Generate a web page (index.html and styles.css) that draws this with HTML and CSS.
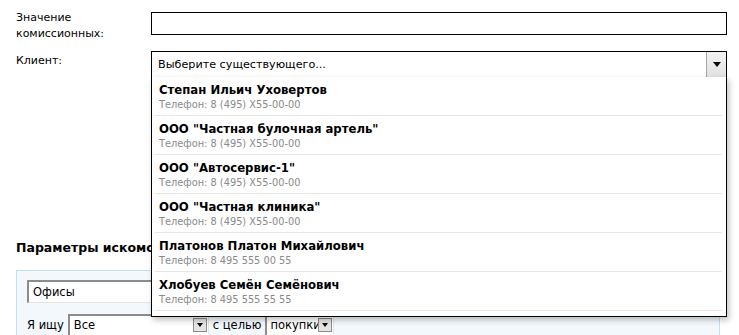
FILE: index.html
```html
<!DOCTYPE html>
<html lang="ru">
<head>
  <meta charset="UTF-8">
  <title>Объект</title>
  <link rel="stylesheet" href="styles.css">
</head>
<body>

<div class="page">
  <div class="row row-first">
    <label class="label">Значение<br>комиссионных:</label>
    <div class="field"><div class="text-input"></div></div>
  </div>

  <div class="row">
    <label class="label label-single">Клиент:</label>
    <div class="field">
      <div class="combo">
        <div class="combo-value">Выберите существующего...</div>
        <span class="combo-btn"><i class="arrow"></i></span>

        <ul class="combo-list">
          <li class="client">
            <div class="client-name">Степан Ильич Уховертов</div>
            <div class="client-phone">Телефон: 8 (495) X55-00-00</div>
          </li>
          <li class="client">
            <div class="client-name">ООО "Частная булочная артель"</div>
            <div class="client-phone">Телефон: 8 (495) X55-00-00</div>
          </li>
          <li class="client">
            <div class="client-name">ООО "Автосервис-1"</div>
            <div class="client-phone">Телефон: 8 (495) X55-00-00</div>
          </li>
          <li class="client">
            <div class="client-name">ООО "Частная клиника"</div>
            <div class="client-phone">Телефон: 8 (495) X55-00-00</div>
          </li>
          <li class="client">
            <div class="client-name">Платонов Платон Михайлович</div>
            <div class="client-phone">Телефон: 8 495 555 00 55</div>
          </li>
          <li class="client">
            <div class="client-name">Хлобуев Семён Семёнович</div>
            <div class="client-phone">Телефон: 8 495 555 55 55</div>
          </li>
        </ul>
      </div>
    </div>
  </div>

  <h3 class="section-title">Параметры искомого объекта</h3>

  <div class="search-panel">
    <div class="inset-input offices">Офисы</div>
    <div class="search-line">
      <span>Я ищу</span>
      <div class="inset-input small-select select-all">Все<span class="mini-btn"><i class="arrow"></i></span></div>
      <span>с целью</span>
      <div class="inset-input small-select select-goal">покупки<span class="mini-btn"><i class="arrow"></i></span></div>
    </div>
  </div>
</div>

</body>
</html>
```

FILE: styles.css
```css
body {
  margin: 0;
  background: #fff;
  color: #000;
  font-family: 'DejaVu Sans', Verdana, sans-serif;
  font-size: 11px;
}

.page {
  padding: 10px 12px 0 16px;
}

.row {
  display: flex;
  align-items: flex-start;
}

.row-first {
  margin-bottom: 9px;
}

.label {
  width: 135px;
  flex: none;
  line-height: 16px;
}

.label-single {
  padding-top: 2px;
}

.field {
  flex: 1;
}

.text-input {
  margin-top: 2px;
  height: 23px;
  box-sizing: border-box;
  border: 1px solid #000;
  background: #fff;
}

.combo {
  position: relative;
  height: 26px;
  box-sizing: border-box;
  border: 1px solid #000;
  border-bottom: none;
  background: #fff;
}

.combo-value {
  padding-left: 6px;
  line-height: 25px;
  font-size: 11.2px;
}

.combo-btn {
  position: absolute;
  top: 0;
  right: 0;
  width: 19px;
  height: 25px;
  border-left: 1px solid #a6a6a6;
  background: linear-gradient(#f2f2f2, #e2e2e2);
  display: flex;
  align-items: center;
  justify-content: center;
}

.arrow {
  display: block;
  width: 0;
  height: 0;
  border-left: 4px solid transparent;
  border-right: 4px solid transparent;
  border-top: 5px solid #000;
}

.combo-list {
  position: absolute;
  z-index: 2;
  top: 100%;
  left: -1px;
  right: -1px;
  margin: 0;
  padding: 0 4px 5px 3px;
  list-style: none;
  background: #fff;
  border: 1px solid #000;
  border-top: none;
  box-shadow: 2px 3px 6px rgba(0, 0, 0, 0.25);
}

.client {
  height: 38px;
  padding: 0 4px;
  border-bottom: 1px solid #e6e6e6;
  box-sizing: content-box;
}

.client-name {
  padding-top: 5px;
  font-weight: bold;
  font-size: 11.7px;
  line-height: 16px;
}

.client-phone {
  color: #8a8a8a;
  font-size: 9.8px;
  line-height: 14px;
}

.section-title {
  margin: 163px 0 14px;
  font-size: 12.5px;
  line-height: 16px;
}

.search-panel {
  margin-right: 7px;
  height: 80px;
  padding: 9px 10px 0;
  background: #f2f8fc;
  border: 1px solid #c4dff3;
}

.inset-input {
  box-sizing: border-box;
  background: #fff;
  border-top: 2px solid #8c8c8c;
  border-left: 2px solid #8c8c8c;
  border-right: 1px solid #e4e4e4;
  border-bottom: 1px solid #e4e4e4;
}

.offices {
  height: 23px;
  padding-left: 4px;
  line-height: 20px;
  font-size: 11.5px;
}

.search-line {
  display: flex;
  align-items: center;
  gap: 4px;
  margin-top: 11px;
  font-size: 11.5px;
}

.small-select {
  position: relative;
  height: 22px;
  line-height: 19px;
  padding-left: 4px;
}

.select-all {
  width: 141px;
}

.select-goal {
  width: 69px;
  padding-left: 3px;
}

.mini-btn {
  position: absolute;
  top: 2px;
  right: 1px;
  width: 12px;
  height: 12px;
  border: 1px solid #8c8c8c;
  background: #e4e4e4;
  display: flex;
  align-items: center;
  justify-content: center;
}

.mini-btn .arrow {
  border-left-width: 3px;
  border-right-width: 3px;
  border-top-width: 4px;
}
```
